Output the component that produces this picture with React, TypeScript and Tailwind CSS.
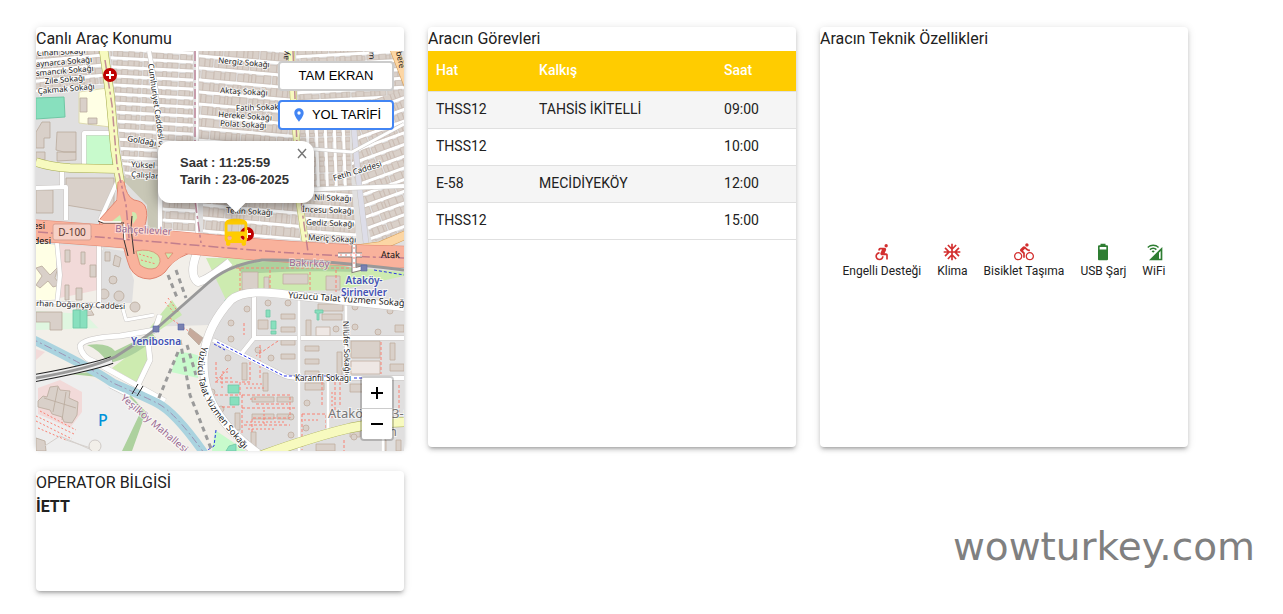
import type { ReactNode } from "react";
import {
  MdAcUnit,
  MdAccessibleForward,
  MdCellWifi,
  MdDirectionsBike,
  MdDirectionsBus,
  MdPlace,
} from "react-icons/md";

interface Trip {
  readonly line: string;
  readonly departure: string;
  readonly time: string;
}

const TRIPS: ReadonlyArray<Trip> = [
  { line: "THSS12", departure: "TAHSİS İKİTELLİ", time: "09:00" },
  { line: "THSS12", departure: "", time: "10:00" },
  { line: "E-58", departure: "MECİDİYEKÖY", time: "12:00" },
  { line: "THSS12", departure: "", time: "15:00" },
];

const FEATURES = [
  { label: "Engelli Desteği", icon: <MdAccessibleForward size={20} />, color: "text-[#d32f2f]" },
  { label: "Klima", icon: <MdAcUnit size={20} />, color: "text-[#d32f2f]" },
  { label: "Bisiklet Taşıma", icon: <MdDirectionsBike size={20} />, color: "text-[#d32f2f]" },
  { label: "USB Şarj", icon: <BatteryIcon />, color: "text-[#2e7d32]" },
  { label: "WiFi", icon: <MdCellWifi size={20} />, color: "text-[#2e7d32]" },
];

function BatteryIcon() {
  return (
    <svg viewBox="0 0 24 24" width="20" height="20" fill="currentColor">
      <path d="M16,9H8V6H16M16.67,4H15V2H9V4H7.33A1.33,1.33 0 0,0 6,5.33V20.67C6,21.4 6.6,22 7.33,22H16.67A1.33,1.33 0 0,0 18,20.67V5.33C18,4.6 17.4,4 16.67,4Z" />
    </svg>
  );
}

// ---- map drawing ----

interface Block {
  readonly id: string;
  readonly points: string;
  readonly cx: number;
  readonly cy: number;
  readonly w: number;
  readonly h: number;
  readonly angle: number;
  readonly pitch: number;
}

const BLOCKS: ReadonlyArray<Block> = [
  { id: "a0", points: "36,51 104,51 106,84 36,92", cx: 70, cy: 70, w: 90, h: 60, angle: -5, pitch: 10 },
  { id: "a1", points: "110,51 193,51 193,160 122,160", cx: 152, cy: 105, w: 100, h: 140, angle: 3, pitch: 9 },
  { id: "a2", points: "122,160 158,165 158,180 126,178", cx: 145, cy: 170, w: 60, h: 40, angle: 6, pitch: 9 },
  { id: "b1", points: "198,51 290,51 293,145 198,145", cx: 245, cy: 98, w: 110, h: 120, angle: 5, pitch: 12 },
  { id: "c1", points: "296,51 396,51 404,75 404,104 298,104", cx: 350, cy: 78, w: 130, h: 80, angle: -3, pitch: 9 },
  { id: "c2", points: "298,106 350,106 350,150 352,190 300,190", cx: 325, cy: 148, w: 100, h: 70, angle: 88, pitch: 9 },
  { id: "c3", points: "352,106 404,90 404,236 372,242 352,170", cx: 378, cy: 170, w: 130, h: 180, angle: -20, pitch: 11 },
  { id: "d1", points: "302,190 352,190 357,244 308,242", cx: 330, cy: 218, w: 70, h: 70, angle: 4, pitch: 13 },
  { id: "d2", points: "203,196 296,196 300,240 203,234", cx: 250, cy: 215, w: 120, h: 60, angle: 5, pitch: 13 },
  { id: "d3", points: "159,200 199,200 199,234 158,231", cx: 180, cy: 215, w: 60, h: 50, angle: 3, pitch: 11 },
];

// Terraced houses along parallel streets, widths cycle so the strip looks irregular.
function houses({ cx, cy, w, h, pitch }: Block) {
  const sizes = [5, 4, 7, 5, 6, 3, 8, 4, 6];
  const depths = [0, 1, 0, 0, 1, 0, 1];
  let d = "";
  let n = 0;
  for (let y = cy - h / 2; y < cy + h / 2; y += pitch) {
    for (let x = cx - w / 2; x < cx + w / 2; n++) {
      const bw = sizes[(n * 5 + 2) % sizes.length];
      const cut = depths[n % depths.length];
      d += `M${x} ${y + cut}h${bw}v${pitch - 4 - cut}h${-bw}z`;
      x += bw + (n % 6 === 0 ? 2 : 0);
    }
  }
  return d;
}

function streets({ cx, cy, w, h, pitch }: Block) {
  let d = "";
  for (let y = cy - h / 2; y < cy + h / 2; y += pitch) {
    d += `M${cx - w / 2} ${y - 2}h${w}`;
  }
  return d;
}

function CityBlock({ block }: { block: Block }) {
  return (
    <g clipPath={`url(#${block.id})`}>
      <clipPath id={block.id}>
        <polygon points={block.points} />
      </clipPath>
      <polygon points={block.points} fill="#e0dfdf" />
      <g transform={`rotate(${block.angle} ${block.cx} ${block.cy})`}>
        <path d={streets(block)} stroke="#fff" strokeWidth="3" />
        <path d={houses(block)} fill="#d9d0c9" stroke="#c8bab0" strokeWidth="0.6" />
      </g>
    </g>
  );
}

function Road({ d, width, fill = "#fff", casing = "#c9c6c4" }: {
  d: string;
  width: number;
  fill?: string;
  casing?: string;
}) {
  return (
    <g fill="none" strokeLinejoin="round">
      <path d={d} stroke={casing} strokeWidth={width + 1} />
      <path d={d} stroke={fill} strokeWidth={width} />
    </g>
  );
}

type LabelData = readonly [text: string, x: number, y: number, angle: number];

const STREET_LABELS: ReadonlyArray<LabelData> = [
  ["Cihan Sokağı", 37, 56, -3],
  ["aynarca Sokağı", 36, 67, -5],
  ["smancık Sokağı", 36, 76, -5],
  ["Zile Sokağı", 45, 84, -5],
  ["Çakmak Sokağı", 38, 94, -5],
  ["Cumhuriyet Caddesi", 148, 64, 82],
  ["Nergiz Sokağı", 218, 63, 5],
  ["Aktaş Sokağı", 220, 93, 3],
  ["Fatih Sokak", 236, 111, -2],
  ["Hereke Sokağı", 218, 117, 4],
  ["Polat Sokağı", 220, 126, 3],
  ["Goldağı S", 127, 141, 10],
  ["Yüksel", 131, 167, 3],
  ["Çalışlar", 131, 177, 4],
  ["Fetih Caddesi", 334, 181, -17],
  ["Nil Sokağı", 314, 200, 2],
  ["İncesu Sokağı", 302, 212, 2],
  ["Gediz Sokağı", 306, 225, 2],
  ["Meriç Sokağı", 308, 240, 3],
  ["Tekin Sokağı", 226, 213, 3],
  ["Karanfil Sokağı", 295, 381, 0],
  ["Nilüfer Sokağı", 343, 321, 88],
  ["rhan Doğançay Caddesi", 36, 306, 2],
];

function MapDrawing() {
  return (
    <svg
      viewBox="36 51 368 400"
      preserveAspectRatio="xMidYMid slice"
      className="block h-full w-full"
      role="img"
      aria-label="Canlı araç konumu haritası"
      fontFamily="'Noto Sans', sans-serif"
    >
      <rect x="0" y="0" width="500" height="500" fill="#e0dfdf" />

      {/* land use */}
      <polygon points="118,175 158,180 158,231 148,230 147,205" fill="#c8c7b6" />
      <polygon points="36,242 56,245 56,300 36,300" fill="#ffffe5" />
      <polygon points="59,245 99,247 99,300 59,300" fill="#f2dad9" />
      <polygon points="79,92 107,88 110,127 79,123" fill="#ffffe5" stroke="#dedab0" />
      <polygon points="101,248 205,250 226,262 180,310 160,330 36,330 36,303 126,284" fill="#f2efe9" />
      <polygon points="103,248 124,251 134,280 132,303 100,303" fill="#e0dfdf" />
      <polygon points="36,311 85,314 100,330 85,335 36,333" fill="#dff6e0" />
      <polygon points="36,330 210,325 204,352 204,390 250,451 36,451" fill="#f2efe9" />
      <polygon points="80,375 110,385 142,412 126,451 36,451 36,378" fill="#eee" />
      <polygon points="38,388 60,380 82,392 82,412 70,428 38,414" fill="#f2dad9" />
      <polygon points="36,349 45,352 36,360" fill="#f2dad9" />
      <polygon points="36,98 64,97 65,117 36,119" fill="#88e0be" stroke="#6fc7a4" />
      <polygon points="84,133 111,132 113,166 84,166" fill="#c8facc" stroke="#9fd6a4" />
      <polygon points="190,353 200,356 198,378 171,372 178,352" fill="#c8facc" />
      <polygon points="215,430 246,451 212,451" fill="#c8facc" />
      <polygon points="206,258 238,258 404,272 404,276 340,290 240,292 226,300" fill="#cdebb0" />
      <path d="M236 264Q300 258 350 267L356 272Q300 270 242 274z" fill="#add19e" />
      <polygon points="112,368 149,340 147,362 138,383" fill="#cdebb0" />
      <path d="M87 345Q108 342 115 351L152 333L156 338Q130 360 108 363Q100 350 87 345z" fill="#add19e" />
      <path d="M70 374L108 378L142 409L122 451H132L146 412L122 386L92 372z" fill="#add19e" />
      <path d="M148 330L172 300L182 315L154 334z" fill="#c8e8b0" />

      {BLOCKS.map((block) => (
        <CityBlock key={block.id} block={block} />
      ))}

      {/* larger footprints */}
      <g fill="#d9d0c9" stroke="#b9a99c" strokeWidth="0.8">
        <path d="M66 178H114V208L102 211L66 205zM36 190H53V213H36zM42 122H50V138H44V148H36V132zM57 132H76V152H64L56 150zM57 152H76V160L57 161zM80 98H87V112H80zM88 118H97V124H88zM36 152H45V160H36z" />
        <path d="M65 250H70V262H65zM81 252H85V264H81zM65 285H69V300H65zM76 288H82V300H76zM90 265H96V277H90zM105 252H110V261H105zM115 255L121 258L119 267L113 265z" />
        <path d="M36 268L42 266L50 275L58 267L55 278L60 285L53 287L48 281L40 288L36 285L42 276z" />
        <path d="M36 312H62V330H50V322H36zM78 306Q72 314 84 316L94 315L88 305z" />
        <path d="M50 387L58 386L60 390L70 391L69 398L78 402L77 415L72 423L64 422L62 417L52 414L50 410L38 407L38 401L43 396L47 397z" />
        <path d="M58 387L53 412M44 398L76 408M66 392L62 420" fill="none" />
        <path d="M36 438L45 441L46 451H36z" />
        <circle cx="104" cy="294" r="5" />
        <circle cx="119" cy="296" r="5" />
        <circle cx="135" cy="307" r="5" />
        <circle cx="113" cy="280" r="4" />
        <path d="M190 328L203 338L199 345L188 334z" fill="#c6aa9c" />
      </g>
      <g fill="#d9d0c9" stroke="#c0ad9f" strokeWidth="0.8">
        <path d="M242 272H258V290H242zM283 274H308V284H283zM326 276H340V290H326zM264 277H269V291H264z" />
        <path d="M258 320H268V329H258zM281 314H295V319H281zM281 327H295V332H281zM281 340H295V345H281zM281 354H295V359H281zM306 320H311V336H306zM318 304H343V311H318zM322 314H342V320H322z" />
        <path d="M305 346H319V351H305zM305 359H319V364H305zM305 371H319V376H305zM305 383H324V390H305zM351 341H380V358H351zM390 343H395V360H390zM390 364H404V371H390zM395 325H404V332H395zM337 352H342V378H337z" />
        <path d="M242 363H247V380H242zM263 373H268V391H263zM252 397H274V402H252zM277 397H293V402H277zM252 414H274V419H252zM277 414H293V419H277zM350 384H364V392H350zM235 413H240V430H235zM251 432H256V450H251z" />
        <path d="M316 444H335V451H316zM350 430H360V437H350zM382 440H386V451H382zM396 440H401V451H396z" />
        <path d="M316 327H330V336H316zM351 361H380V374H351z" fill="#eee7e4" />
        {[
          [231, 323], [231, 339], [247, 309], [268, 303], [288, 303], [228, 358], [271, 358],
          [258, 350], [336, 329], [355, 307], [355, 327], [378, 332], [390, 311], [307, 403],
          [221, 409], [291, 417], [291, 435], [306, 428], [212, 392], [354, 437],
        ].map(([x, y]) => (
          <circle key={`${x}-${y}`} cx={x} cy={y} r="3" />
        ))}
      </g>
      <g fill="#88e0be" stroke="#6fc7a4" strokeWidth="0.8">
        <path d="M73 310H87V328H73zM80 310V328M228 385H239V393H228zM230 397H239V405H230zM266 310H270V317H266zM271 321H276V329H271zM271 331H276V334H271zM315 310H323V313H319V320H317V313H315zM225 300H229V306H225zM229 446L236 444V451H226z" />
      </g>

      {/* footpaths */}
      <g fill="none" stroke="#fa8072" strokeWidth="1" strokeDasharray="3 2">
        <path d="M236 268H350M240 268V295M270 270V292M310 272V290M336 270V292M215 382H240V395H214M242 395H290V418H252V432M242 395V440M250 362V382H240M260 345V380M216 362V378H232M302 414H326V440M302 414V450M322 382V405M335 382V410M340 382V405M381 342V374M399 385V412M244 323V335M344 440V451M242 408H296M244 425H290M256 404H288M278 341L256 356M212 407H236M228 368L216 382" />
        <path d="M36 416L74 434M36 421L72 439M38 428L66 440M40 411L76 430M165 302L175 314M168 298L178 312M170 318L190 332M133 268H146M133 262L150 273" strokeDasharray="2 2" />
        <path d="M244 384H262M246 388H266M300 420H320M332 392V420M246 422H286M248 429H276M264 410V426M228 372H222V388M256 399H248" strokeDasharray="2 2" />
      </g>
      <g fill="none" stroke="#2a35e8" strokeWidth="1" strokeDasharray="3 2">
        <path d="M374 270L404 275M216 430L214 446L206 451M214 344L225 350" />
      </g>

      {/* residential streets */}
      <Road d="M197 51V235" width={3} />
      <Road d="M149 51L156 90L160 160V232" width={4} />
      <Road d="M352 106L358 175L366 243" width={5} fill="#dddde8" />
      <Road d="M36 188L66 187V220M62 163V188M84 166V133H112M118 180L100 220" width={4} />
      <Road d="M296 190L404 186" width={4} />
      <Road d="M299 148L352 152L404 124" width={3} />
      <Road d="M57 243L60 275L57 304M99 245V304M36 303L120 306" width={4} />
      <Road d="M198 250Q188 275 198 282Q208 280 230 262" width={8} />
      <Road d="M160 315L155 330L120 336Q82 338 80 346Q82 358 95 362L165 401M148 342L150 360L138 385M110 385L130 395" width={5} />
      <Road d="M154 315L126 320L122 306M36 302L124 306" width={3} />
      <Road d="M254 296V338L242 353M254 338H404M213 340L285 376Q290 378 300 378H404" width={4} />
      <Road d="M299 296V451M346 300V382M328 380V432M383 425V451" width={3} />
      <Road d="M404 307Q330 299 290 295Q245 288 231 300Q208 325 204 354Q201 390 220 416Q235 438 262 456" width={8} />
      <path d="M217 342L284 376H345M354 378H362" fill="none" stroke="#2a35e8" strokeDasharray="3 2" />
      <path d="M40 449L60 436L94 451M66 440L100 451" fill="none" stroke="#d5d0cc" />
      <circle cx="95" cy="446" r="6" fill="#f2efe9" stroke="#cfcac6" />
      <g fill="none" stroke="#9a9a9a" strokeWidth="3" strokeDasharray="5 4">
        <path d="M178 352L158 400M180 340L190 395L212 451M187 345L196 375M168 275L178 300M176 270L186 298" />
      </g>

      {/* river */}
      <path d="M30 338Q90 367 113 383Q145 397 157 403Q175 412 204 453" fill="none" stroke="#aad3df" strokeWidth="9" />
      <path d="M30 338Q90 367 113 383Q145 397 157 403Q175 412 204 453" fill="none" stroke="#9d92b4" strokeWidth="1" strokeDasharray="8 3 2 3" />

      {/* secondary roads */}
      <Road d="M103 46L110 95L115 150L121 188M36 162Q50 167 70 168L118 169" width={8} fill="#f7fabf" casing="#a5aa50" />
      <Road d="M291 46L294 110L297 145L299 200L306 246" width={6} fill="#f7fabf" casing="#b5b96c" />
      <Road d="M260 456Q315 436 350 428Q380 422 410 422" width={9} fill="#f7fabf" casing="#a5aa50" />
      <Road d="M393 46L410 90M350 250L380 246L410 233" width={8} fill="#fcd6a4" casing="#d39c55" />

      {/* D-100 and its junction */}
      <path
        d="M118 182L117 200L100 219L99 228H144Q149 214 145 206Q142 201 134 200Q126 196 124 182z"
        fill="#f9b29c"
        stroke="#e08570"
      />
      <path
        d="M122 240Q126 258 130 268Q136 279 150 279Q163 277 168 268Q176 256 200 250V240z"
        fill="#f9b29c"
        stroke="#e08570"
      />
      <Road d="M30 230L110 236L240 248Q320 255 410 257" width={21} fill="#f9b29c" casing="#e08570" />
      <path d="M119 180L117 201L103 219V232H143Q147 214 144 207Q141 202 133 201Q125 196 123 180zM123 240L131 267Q138 278 152 278L167 267L190 250V240z" fill="#f9b29c" />
      <path d="M136 251Q150 248 158 255Q163 262 156 268Q148 271 140 265z" fill="#cdebb0" stroke="#e08570" strokeWidth="0.8" />
      <path d="M139 254L152 258M141 260L156 264" stroke="#fa8072" strokeDasharray="2 2" />
      <path d="M165 253H173L168 259z" fill="#cdebb0" stroke="#e08570" strokeWidth="0.8" />
      <path d="M111 222L120 215L122 222z" fill="#cdebb0" />
      <path d="M132 212Q137 211 137 218L133 224z" fill="#cdebb0" />
      <path d="M98 221L103 223H122M132 216L131 228L134 254M123 222L124 240L128 256" fill="none" stroke="#333" strokeWidth="1" />
      <path d="M99 220L104 222H121M124 224L125 240" fill="none" stroke="#fff" strokeWidth="1.5" />
      <g fill="none" stroke="#b5728a" strokeWidth="1.5" strokeDasharray="10 3 3 3" opacity="0.8">
        <path d="M38 232L110 238L240 249Q320 256 404 258" />
        <path d="M105 60L112 105L117 165L126 205L129 238M195 51V200L201 243M293 51L297 145L302 210L308 252" />
      </g>

      {/* railway */}
      <path d="M30 379Q90 368 112 360" fill="none" stroke="#222" strokeWidth="8" />
      <path d="M30 379Q90 368 112 360" fill="none" stroke="#eee" strokeWidth="6" />
      <path d="M30 379Q90 369 115 357Q150 335 165 321L208 283Q228 265 262 260Q320 259 404 270" fill="none" stroke="#999" strokeWidth="3" />
      <path d="M132 394L138 384M137 396L143 386" stroke="#222" />
      <path d="M338 255H362M354 245V270L362 268" fill="none" stroke="#857b78" strokeWidth="5" />
      <path d="M338 255H362M354 245V270L362 268" fill="none" stroke="#fff" strokeWidth="3" />
      <path d="M340 255H362M354 247V268" fill="none" stroke="#fa8072" strokeDasharray="2 3" />
      <g fill="#7981b0" stroke="#5964a8" strokeWidth="0.6">
        <path d="M361 265H367V271H361zM153 326H159V332H153zM178 324H184V330H178z" />
      </g>

      {/* hospitals */}
      {[[110, 75], [247, 234]].map(([x, y]) => (
        <g key={x}>
          <circle cx={x} cy={y} r="7" fill="#bf0000" />
          <path d={`M${x - 4} ${y}h8M${x} ${y - 4}v8`} stroke="#fff" strokeWidth="2" />
        </g>
      ))}

      {/* labels */}
      <g fontSize="8" fill="#222" stroke="#fff" strokeWidth="2" strokeOpacity="0.8" paintOrder="stroke" strokeLinejoin="round">
        {STREET_LABELS.map(([text, x, y, angle]) => (
          <text key={text} x={x} y={y} transform={`rotate(${angle} ${x} ${y})`}>
            {text}
          </text>
        ))}
        <path id="talat" d="M202 346Q188 385 221 422Q232 436 250 456" fill="none" stroke="none" />
        <text fontSize="9">
          <textPath href="#talat">Yüzücü Talat Yüzmen Sokağı</textPath>
        </text>
        <text x="288" y="298" fontSize="9" transform="rotate(4 288 298)">Yüzücü Talat Yüzmen Sokağ</text>
      </g>
      <g fontSize="9" fill="#111">
        <text x="45" y="229" textAnchor="end">esi</text>
        <text x="51" y="244" textAnchor="end">desi</text>
        <text x="381" y="258">Atak</text>
        <text x="288" y="60" transform="rotate(-85 288 60)" fontSize="8">ay</text>
        <text x="369" y="52" transform="rotate(88 369 52)" fontSize="8">m</text>
        <text x="396" y="52" transform="rotate(78 396 52)" fontSize="8">bere</text>
      </g>
      <g fill="#9a6a92" stroke="#fff" strokeWidth="2" strokeOpacity="0.5" paintOrder="stroke" fontSize="10">
        <text x="115" y="232" transform="rotate(3 115 232)">Bahçelievler</text>
        <text x="289" y="266" transform="rotate(2 289 266)">Bakırköy</text>
        <text x="120" y="399" transform="rotate(40 120 399)">Yeşilköy Mahallesi</text>
      </g>
      <g fill="#4452b5" stroke="#fff" strokeWidth="2" strokeOpacity="0.7" paintOrder="stroke" fontSize="10" fontWeight="600" textAnchor="middle">
        <text x="364" y="284">Ataköy-</text>
        <text x="364" y="296">Sirinevler</text>
        <text x="156" y="345">Yenibosna</text>
      </g>
      <g fill="#777" stroke="#fff" strokeWidth="2" strokeOpacity="0.6" paintOrder="stroke" fontSize="13">
        <text x="328" y="418">Atakö</text>
        <text x="392" y="418">3-9</text>
        <text x="397" y="436" textAnchor="end">m</text>
      </g>
      <text x="98" y="426" fontSize="16" fontWeight="500" fill="#0092da">P</text>
      <rect x="53" y="224" width="38" height="16" rx="2" fill="#f6d0c6" stroke="#d9a090" />
      <text x="72" y="236" fontSize="10" fill="#5c3a30" textAnchor="middle">D-100</text>
    </svg>
  );
}

function VehicleMap() {
  return (
    <div className="relative h-100 shrink-0 overflow-hidden font-['Liberation_Sans',sans-serif]">
      <MapDrawing />

      <div className="absolute top-[165px] left-[183px] text-[#fc0]">
        <MdDirectionsBus size={34} />
      </div>

      <div className="absolute top-[90px] left-[122px] w-[156px]">
        <div className="absolute top-[52px] left-[70px] size-4 rotate-45 bg-white shadow-[0_3px_14px_rgba(0,0,0,0.4)]" />
        <div className="relative rounded-xl bg-white px-[22px] pt-[13px] pb-[15px] text-[13px] leading-[17px] font-bold text-[#333] shadow-[0_3px_14px_rgba(0,0,0,0.4)]">
          <p>Saat : 11:25:59</p>
          <p>Tarih : 23-06-2025</p>
          <button type="button" aria-label="Kapat" className="absolute top-0 right-0 size-6 text-[#757575]">
            <svg viewBox="0 0 24 24" className="size-6" fill="none" stroke="currentColor" strokeWidth="1.4">
              <path d="M8 8l8 9M16 8l-8 9" />
            </svg>
          </button>
        </div>
        <div className="absolute top-[52px] left-[70px] size-4 rotate-45 bg-white" />
      </div>

      <div className="absolute top-2.5 right-2.5 flex w-[116px] flex-col gap-[9px] text-[13px] text-black">
        <button type="button" className="h-[30px] rounded border-2 border-[#ccc] bg-white">
          TAM EKRAN
        </button>
        <button
          type="button"
          className="flex h-[30px] items-center justify-center gap-[5px] rounded border-2 border-[#4285f4] bg-white"
        >
          <MdPlace size={16} className="text-[#4285f4]" />
          YOL TARİFİ
        </button>
      </div>

      <div className="absolute right-2.5 bottom-2.5 w-[34px] rounded border-2 border-black/20 bg-clip-padding">
        <button type="button" aria-label="Yakınlaştır" className="flex h-[31px] w-full items-center justify-center rounded-t-xs border-b border-[#ccc] bg-white">
          <ZoomGlyph d="M0 6h12M6 0v12" />
        </button>
        <button type="button" aria-label="Uzaklaştır" className="flex h-[30px] w-full items-center justify-center rounded-b-xs bg-white">
          <ZoomGlyph d="M0 6h12" />
        </button>
      </div>
    </div>
  );
}

function ZoomGlyph({ d }: { d: string }) {
  return (
    <svg viewBox="0 0 12 12" className="size-3" stroke="#000" strokeWidth="2">
      <path d={d} />
    </svg>
  );
}

function Card({ title, size, children }: { title: string; size: string; children: ReactNode }) {
  return (
    <section
      className={`flex flex-col rounded bg-white shadow-[0_3px_3px_-2px_rgba(0,0,0,0.2),0_3px_4px_0_rgba(0,0,0,0.14),0_1px_8px_0_rgba(0,0,0,0.12)] ${size}`}
    >
      <h2 className="text-base leading-6">{title}</h2>
      {children}
    </section>
  );
}

function TripTable() {
  return (
    <table className="w-full table-fixed border-collapse text-left text-sm">
      <thead className="bg-[#fc0] text-white">
        <tr className="border-b border-[#e0e0e0] leading-6">
          <th className="w-[28%] px-2 pt-[7px] pb-[9px] font-medium">Hat</th>
          <th className="w-[185px] px-2 pt-[7px] pb-[9px] font-medium">Kalkış</th>
          <th className="px-2 pt-[7px] pb-[9px] font-medium">Saat</th>
        </tr>
      </thead>
      <tbody>
        {TRIPS.map((trip) => (
          <tr key={trip.time} className="border-b border-[#e0e0e0] odd:bg-[#f5f5f5]">
            <td className="px-2 pt-[7px] pb-[9px]">{trip.line}</td>
            <td className="px-2 pt-[7px] pb-[9px]">{trip.departure}</td>
            <td className="px-2 pt-[7px] pb-[9px]">{trip.time}</td>
          </tr>
        ))}
      </tbody>
    </table>
  );
}

export default function App() {
  return (
    <div className="relative bg-white pt-[27px] pb-6 font-[Roboto,sans-serif] text-[#212121]">
      <main className="mx-9 grid max-w-[1152px] grid-cols-1 gap-6 md:grid-cols-3">
        <Card title="Canlı Araç Konumu" size="h-105">
          <VehicleMap />
        </Card>

        <Card title="Aracın Görevleri" size="h-105">
          <TripTable />
        </Card>

        <Card title="Aracın Teknik Özellikleri" size="h-105">
          <ul className="flex flex-1 items-center justify-center gap-4 pt-6">
            {FEATURES.map((feature) => (
              <li key={feature.label} className="flex flex-col items-center">
                <span className={feature.color}>{feature.icon}</span>
                <span className="text-xs leading-[18px]">{feature.label}</span>
              </li>
            ))}
          </ul>
        </Card>

        <Card title="OPERATOR BİLGİSİ" size="h-30">
          <p className="leading-6 font-bold">İETT</p>
        </Card>
      </main>

      <p className="absolute right-7 bottom-[46px] font-['DejaVu_Sans',sans-serif] text-[39px] leading-[44px] text-[#808080]">
        wowturkey.com
      </p>
    </div>
  );
}
